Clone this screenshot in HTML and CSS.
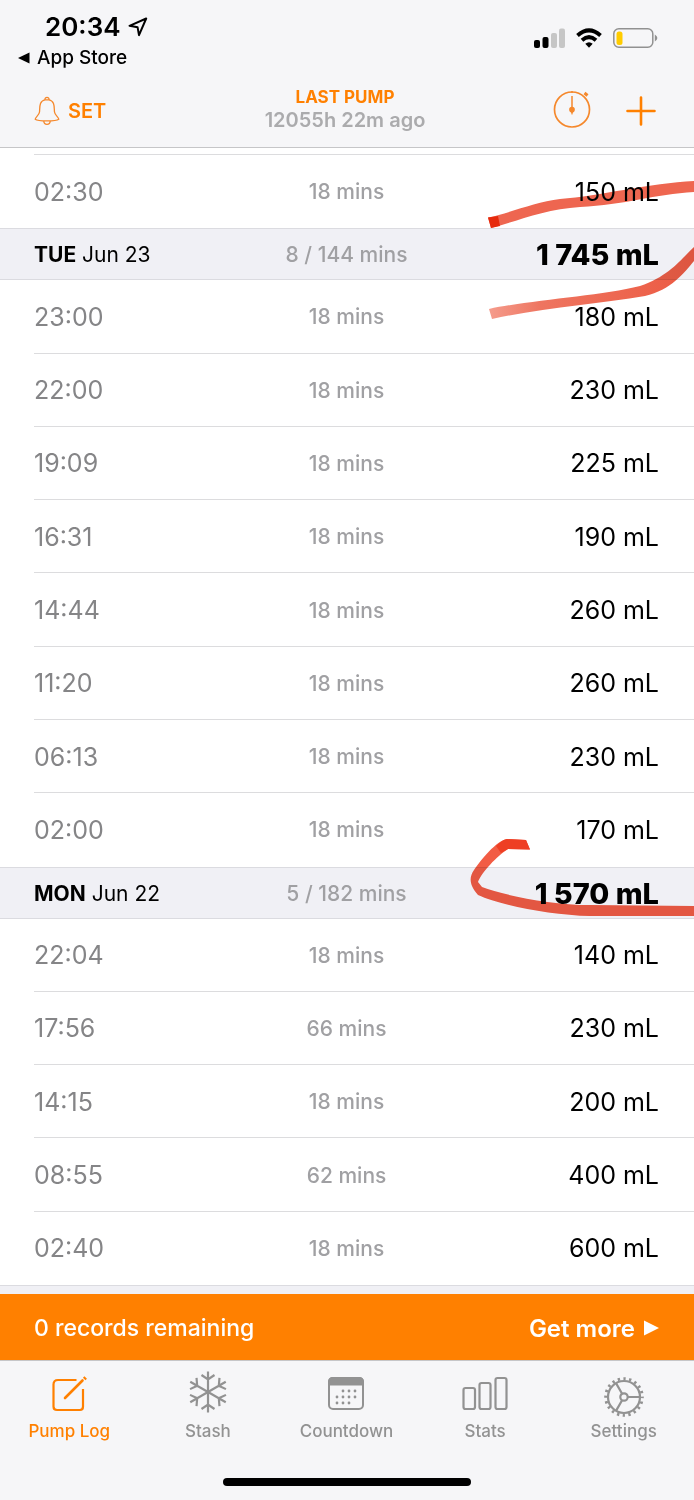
FILE: index.html
```html
<!DOCTYPE html>
<html lang="en">
<head>
<meta charset="utf-8">
<meta name="viewport" content="width=device-width, initial-scale=1">
<title>Pump Log</title>
<link rel="stylesheet" href="styles.css">
</head>
<body>
<div class="screen">
  <header class="top">
    <div class="status">
      <div class="status-left">
        <div class="clock">20:34
          <svg width="20" height="20" viewBox="0 0 20 20" fill="none" stroke="#000" stroke-width="2" stroke-linejoin="round"><path d="M1.500 8.800 18.200 1.500 11 18.200 9.600 10.300Z"/></svg>
        </div>
        <a class="back" href="#"><svg width="12" height="12" viewBox="0 0 12 12"><path d="M0 6 11.500.5v11Z"/></svg>App Store</a>
      </div>
      <svg class="signals" width="124" height="22" viewBox="0 0 124 22">
        <rect x="0" y="12" width="6" height="8" rx="2"/><rect x="8.500" y="9" width="6" height="11" rx="2"/>
        <rect x="17" y="5" width="6" height="15" rx="2" fill="#c6c6c6"/><rect x="25" y="0.500" width="6" height="19.500" rx="2" fill="#c6c6c6"/>
        <g fill="none" stroke="#000" stroke-width="4"><path d="M43.500 7.500Q55-2.600 66.500 7.500"/><path d="M48 12.200Q55 6.200 62 12.200"/></g>
        <path d="M51.300 15.800Q55 12.800 58.700 15.800L55 19.800Z"/>
        <rect x="79.800" y="0.800" width="39" height="18.500" rx="5" fill="none" stroke="#919191" stroke-width="1.500"/>
        <rect x="82.500" y="3.500" width="6" height="13.500" rx="2.500" fill="#ffcc00"/>
        <path d="M120.800 6.500Q126 9.800 120.800 13.500Z" fill="#919191"/>
      </svg>
    </div>
    <div class="nav">
      <button class="set" type="button">
        <svg width="26" height="30" viewBox="0 0 26 30" fill="none" stroke="#f5882c" stroke-width="1.300" stroke-linejoin="round"><path d="M11 3.800C4.800 5 6 12 5.500 16 5.100 19.500 1.200 21 1.200 23.300 4 25.500 22 25.500 24.800 23.300 24.800 21 20.900 19.500 20.500 16 20 12 21.200 5 15 3.800Z"/><path d="M11 3.800C10.500.6 15.500.6 15 3.800M9.800 25C10 29.500 16 29.500 16.200 25"/></svg>
        SET</button>
      <div class="last"><h1>LAST PUMP</h1><p>12055h 22m ago</p></div>
      <div class="actions">
        <button type="button" aria-label="Timer"><svg width="40" height="40" viewBox="0 2 40 40" fill="none" stroke="#f5882c" stroke-width="1.700"><circle cx="20" cy="20.500" r="17.500"/><path d="M20 0v4M20 7v17" stroke-width="1.500"/><circle cx="20" cy="20.500" r="2" fill="#f5882c"/><path d="m18.500 21 1.500 4.500 1.500-4.500Z" fill="#f5882c" stroke-width=".5"/><path d="m32.500 4 3 2.500" stroke-width="3"/></svg></button>
        <button type="button" aria-label="Add"><svg width="30" height="30" viewBox="0 0 30 30" stroke="#ff8000" stroke-width="2.600" stroke-linecap="round"><path d="M15 1.500v27M1.500 15h27"/></svg></button>
      </div>
    </div>
  </header>

  <main class="log">
    <table>
      <tbody>
        <tr class="edge-top"><td></td></tr>
        <tr class="row"><td>02:30</td><td>18 mins</td><td>150 mL</td></tr>
        <tr class="day"><th scope="row"><b>TUE</b> Jun 23</th><td>8 / 144 mins</td><td>1 745 mL</td></tr>
        <tr class="row"><td>23:00</td><td>18 mins</td><td>180 mL</td></tr>
        <tr class="row"><td>22:00</td><td>18 mins</td><td>230 mL</td></tr>
        <tr class="row"><td>19:09</td><td>18 mins</td><td>225 mL</td></tr>
        <tr class="row"><td>16:31</td><td>18 mins</td><td>190 mL</td></tr>
        <tr class="row"><td>14:44</td><td>18 mins</td><td>260 mL</td></tr>
        <tr class="row"><td>11:20</td><td>18 mins</td><td>260 mL</td></tr>
        <tr class="row"><td>06:13</td><td>18 mins</td><td>230 mL</td></tr>
        <tr class="row"><td>02:00</td><td>18 mins</td><td>170 mL</td></tr>
        <tr class="day"><th scope="row"><b>MON</b> Jun 22</th><td>5 / 182 mins</td><td>1 570 mL</td></tr>
        <tr class="row"><td>22:04</td><td>18 mins</td><td>140 mL</td></tr>
        <tr class="row"><td>17:56</td><td>66 mins</td><td>230 mL</td></tr>
        <tr class="row"><td>14:15</td><td>18 mins</td><td>200 mL</td></tr>
        <tr class="row"><td>08:55</td><td>62 mins</td><td>400 mL</td></tr>
        <tr class="row"><td>02:40</td><td>18 mins</td><td>600 mL</td></tr>
        <tr class="edge-bottom"><td></td></tr>
      </tbody>
    </table>
    <svg class="marks" width="240" height="800" viewBox="454 148 240 800" aria-hidden="true">
      <defs><linearGradient id="fade" gradientUnits="userSpaceOnUse" x1="489" y1="0" x2="694" y2="0"><stop offset="0" stop-color="#f59c8c"/><stop offset=".25" stop-color="#ee7560"/><stop offset="1" stop-color="#ec5a42"/></linearGradient></defs>
      <path d="M488 217.500C510 213 535 202 560 199 600 196 650 183 694 181V192C655 194 625 205 580 207 545 209 515 222 491 228Z" fill="#ee6650"/>
      <path d="M488 217.500 498 216 500 226 491 228Z" fill="#e62a0c"/>
      <path d="M489 309C530 300 600 296 640 286 670 276 682 258 694 247V261C684 273 671 290 645 296 600 304 540 308 492 319Z" fill="url(#fade)"/>
      <path d="M507 839 526 840 530 849.500 508 849C497 856 482 872 478 882L482 887C503 895 550 905 590 905L694 906V916H590C550 915 500 905 478 895 469 885 469 877 474 870 480 861 497 840 507 839Z" fill="#f25c44"/>
      <path d="M507 839 526 840 530 849.500 508 849 501 853 496 846Q502 840 507 839Z" fill="#ee3f24"/>
    </svg>
  </main>

  <a class="promo" href="#"><span>0 records remaining</span><strong>Get more <svg width="16" height="16" viewBox="0 0 16 16" fill="#fff"><path d="M1 .5 16 8 1 15.500Z"/></svg></strong></a>

  <nav class="tabs">
    <a class="tab current" href="#" aria-current="page">
      <svg width="46" height="42" viewBox="0 0 46 42" fill="none" stroke="currentColor" stroke-width="2.200"><path d="M30.500 9H12Q7.500 9 7.500 13.500v22Q7.500 39 11 39h23Q37 39 37 35.500V18"/><path d="M19 27 36.500 9.500" stroke-width="2.600" stroke-linecap="round"/><path d="m38.200 8 1.500-1.500" stroke-width="3.500"/></svg>
      Pump Log</a>
    <a class="tab" href="#">
      <svg width="46" height="42" viewBox="-23 -21 46 42" fill="none" stroke="currentColor" stroke-width="2.200">
        <path id="arm" d="M0 0V-20.500M-6.500-17 0-12.500 6.500-17"/>
        <use href="#arm" transform="rotate(60)"/><use href="#arm" transform="rotate(120)"/><use href="#arm" transform="rotate(180)"/><use href="#arm" transform="rotate(240)"/><use href="#arm" transform="rotate(300)"/>
      </svg>
      Stash</a>
    <a class="tab" href="#">
      <svg width="46" height="42" viewBox="0 0 46 42" fill="none" stroke="currentColor" stroke-width="2"><rect x="6" y="7" width="34" height="31" rx="4"/><path d="M6 13.500V11Q6 7 10 7h26Q40 7 40 11v2.500Z" fill="currentColor"/><path d="M20 20h12.100M14 26h18.100M14 32h12.100" stroke-width="2.800" stroke-linecap="round" stroke-dasharray="0 6"/></svg>
      Countdown</a>
    <a class="tab" href="#">
      <svg width="46" height="42" viewBox="0 0 46 42" fill="none" stroke="currentColor" stroke-width="2.200"><rect x="1.500" y="17" width="11.500" height="21" rx="2"/><rect x="17.500" y="12" width="11" height="26" rx="2"/><rect x="33.500" y="7" width="11" height="31" rx="2"/></svg>
      Stats</a>
    <a class="tab" href="#">
      <svg width="46" height="42" viewBox="-23 -26 46 42" fill="none" stroke="currentColor" stroke-width="2.200"><circle r="16"/><circle r="18.300" stroke-width="3" stroke-dasharray="2.300 3.449" stroke-dashoffset="1.150"/><circle r="3.700"/><path d="M3.700 0H16M-1.900-3.200-8-13.900M-1.900 3.200-8 13.900"/></svg>
      Settings</a>
  </nav>
  <div class="home"></div>
</div>
</body>
</html>
```
FILE: styles.css
```css
* { box-sizing: border-box; }
body { margin: 0; font-family: Inter, "Liberation Sans", sans-serif; color: #000; background: #fff; }
svg { display: block; flex: none; }
button { border: 0; padding: 0; background: none; font: inherit; color: inherit; }
a { color: inherit; text-decoration: none; }
h1, p { margin: 0; }

.screen { display: flex; flex-direction: column; min-height: 100vh; }

.top { height: 148px; background: #f6f6f8; border-bottom: 1px solid #c6c6c8; }
.status { display: flex; justify-content: space-between; padding: 11px 36px 0 18px; }
.clock { display: flex; align-items: center; gap: 7px; padding-left: 27px; font-size: 26px; line-height: 32px; font-weight: 600; }
.back { display: flex; align-items: center; gap: 7px; font-size: 19px; line-height: 30px; font-weight: 500; }
.signals { margin-top: 17px; }
.nav { display: grid; grid-template-columns: 1fr auto 1fr; align-items: center; height: 74px; padding: 2px 38px 0 34px; color: #ff8000; }
.set { display: flex; align-items: center; gap: 8px; justify-self: start; font-size: 20px; font-weight: 600; }
.last { padding-bottom: 5px; text-align: center; }
.last h1 { font-size: 17px; line-height: 22px; font-weight: 700; }
.last p { font-size: 20px; line-height: 24px; font-weight: 600; color: #ababad; }
.actions { display: flex; align-items: center; justify-content: flex-end; gap: 34px; }

.log { position: relative; display: flex; flex: 1; }
.log table { display: flex; flex: 1; }
.log tbody { display: flex; flex: 1; flex-direction: column; }
.edge-top { display: block; height: 7px; margin-left: 34px; border-bottom: 1px solid #dcdcde; }
.edge-bottom { display: block; height: 9px; background: #f0f0f5; border-top: 1px solid #dbdbe0; }
.row, .day { display: grid; grid-template-columns: 1fr auto 1fr; align-items: center; padding: 1px 35px 0 0; }
.row { flex: 1; min-height: 60px; margin-left: 34px; border-bottom: 1px solid #dcdcde; }
.row:has(+ .day), .row:has(+ .edge-bottom) { border-bottom-color: transparent; }
.row td, .day td, .day th { padding: 0; }
.row td:first-child { font-size: 25px; color: #858587; }
.row td:nth-child(2), .day td:nth-child(2) { font-size: 21px; font-weight: 500; color: #a0a0a3; }
.row td:last-child { font-size: 25px; text-align: right; }
.day { height: 52px; padding-left: 34px; background: #f0f0f5; border: solid #dbdbe0; border-width: 1px 0; }
.day th { font-size: 21px; font-weight: 400; text-align: left; }
.day b { font-weight: 700; }
.day td:last-child { font-size: 29px; font-weight: 800; text-align: right; }
.marks { position: absolute; top: 0; right: 0; mix-blend-mode: multiply; pointer-events: none; }

.promo { display: flex; align-items: center; justify-content: space-between; height: 66px; padding: 2px 35px 0 34px; background: #ff8000; color: #fff; font-size: 23px; font-weight: 500; }
.promo strong { display: flex; align-items: center; gap: 8px; font-size: 24px; font-weight: 600; }

.tabs { display: grid; grid-template-columns: repeat(5, 1fr); height: 118px; padding: 10px 1px 0 0; background: #f6f6f8; border-top: 1px solid #c6c6c8; color: #929292; }
.tab { display: flex; flex-direction: column; align-items: center; font-size: 17px; line-height: 22px; font-weight: 500; }
.tab svg { height: 42px; margin-bottom: 7px; overflow: visible; }
.tab.current { color: #ff8000; }
.home { height: 22px; background: #f6f6f8; }
.home::before { content: ""; display: block; width: 248px; height: 8px; margin: 0 auto; border-radius: 4px; background: #000; }
```
